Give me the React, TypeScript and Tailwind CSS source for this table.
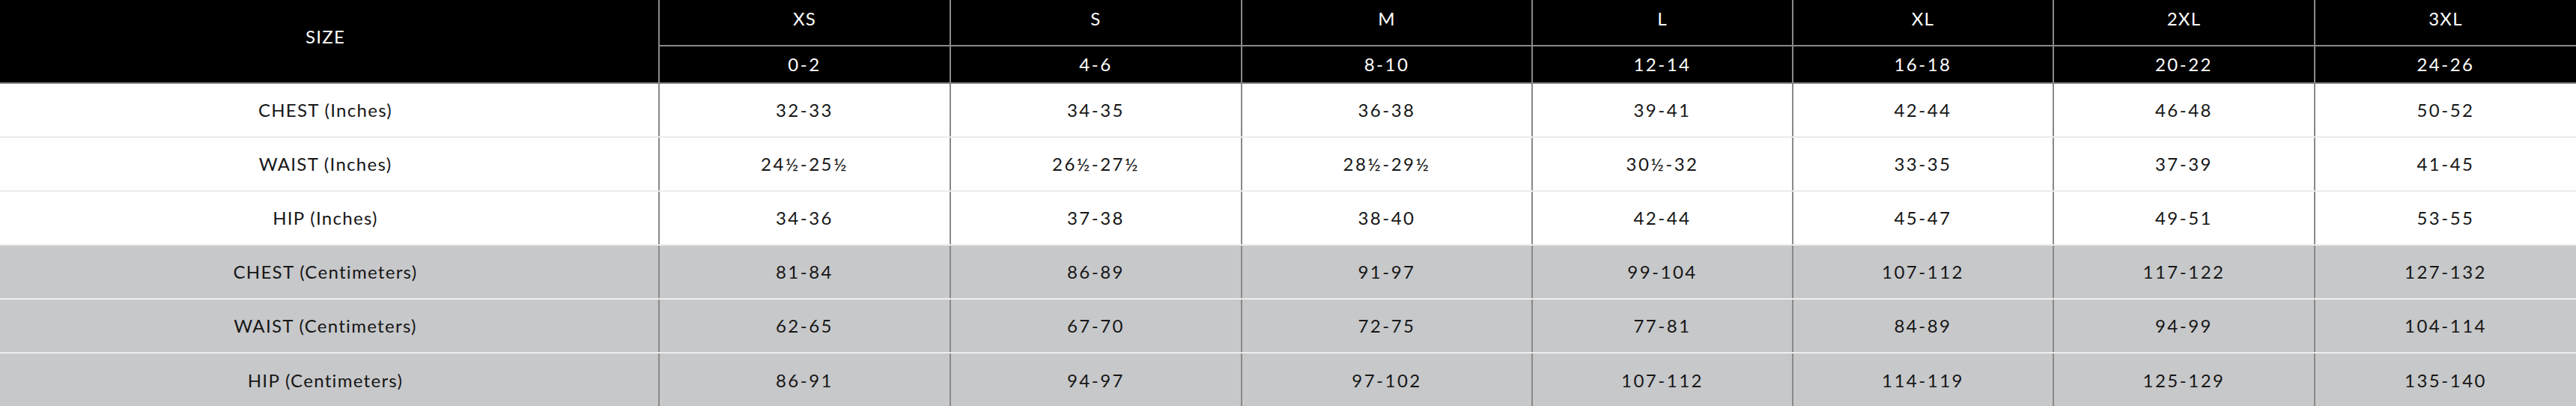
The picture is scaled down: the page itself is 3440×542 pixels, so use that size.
import React from "react";

const widths = ["w-[389px]", "w-[389px]", "w-[388px]", "w-[348px]", "w-[348px]", "w-[349px]", "w-[350px]"];
const sizes = ["XS", "S", "M", "L", "XL", "2XL", "3XL"];
const nums = ["0-2", "4-6", "8-10", "12-14", "16-18", "20-22", "24-26"];

const rows: { label: string; gray: boolean; values: string[] }[] = [
  { label: "CHEST (Inches)", gray: false, values: ["32-33", "34-35", "36-38", "39-41", "42-44", "46-48", "50-52"] },
  { label: "WAIST (Inches)", gray: false, values: ["24½-25½", "26½-27½", "28½-29½", "30½-32", "33-35", "37-39", "41-45"] },
  { label: "HIP (Inches)", gray: false, values: ["34-36", "37-38", "38-40", "42-44", "45-47", "49-51", "53-55"] },
  { label: "CHEST (Centimeters)", gray: true, values: ["81-84", "86-89", "91-97", "99-104", "107-112", "117-122", "127-132"] },
  { label: "WAIST (Centimeters)", gray: true, values: ["62-65", "67-70", "72-75", "77-81", "84-89", "94-99", "104-114"] },
  { label: "HIP (Centimeters)", gray: true, values: ["86-91", "94-97", "97-102", "107-112", "114-119", "125-129", "135-140"] },
];

export default function App() {
  return (
    <div
      className="w-[3440px] h-[542px] bg-white text-[24px] leading-[29px] tracking-[1.3px] overflow-hidden"
      style={{ fontFamily: "Lato, 'Noto Sans', sans-serif" }}
    >
      {/* Header */}
      <div className="flex bg-black text-white border-b-2 border-[#898989]">
        <div className="w-[879px] h-[110px] flex items-center justify-center pr-[10px] pb-[13px]">SIZE</div>
        <div className="flex flex-col">
          <div className="flex h-[62px] border-b-2 border-[#898989]">
            {sizes.map((s, i) => (
              <div key={s} className={`${widths[i]} border-l-2 border-[#898989] flex items-center justify-center pb-[12px]`}>
                {s}
              </div>
            ))}
          </div>
          <div className="flex h-[48px]">
            {nums.map((s, i) => (
              <div key={s} className={`${widths[i]} border-l-2 border-[#898989] flex items-center justify-center pb-[2px] tracking-[2.5px]`}>
                {s}
              </div>
            ))}
          </div>
        </div>
      </div>
      {/* Body */}
      {rows.map((r, ri) => (
        <div
          key={r.label}
          className={`flex h-[72px] text-[#161616] ${r.gray ? "bg-[#c7c8ca]" : "bg-white"} ${
            ri < rows.length - 1 ? "border-b-2" : ""
          } ${r.gray ? "border-[#eeeeee]" : "border-[#ebebeb]"}`}
        >
          <div className="w-[879px] flex items-center justify-center pr-[10px] pb-[2px]">{r.label}</div>
          {r.values.map((v, i) => (
            <div key={i} className={`${widths[i]} border-l-2 border-[#898989] flex items-center justify-center pb-[2px] tracking-[2.5px]`}>
              {v}
            </div>
          ))}
        </div>
      ))}
    </div>
  );
}
